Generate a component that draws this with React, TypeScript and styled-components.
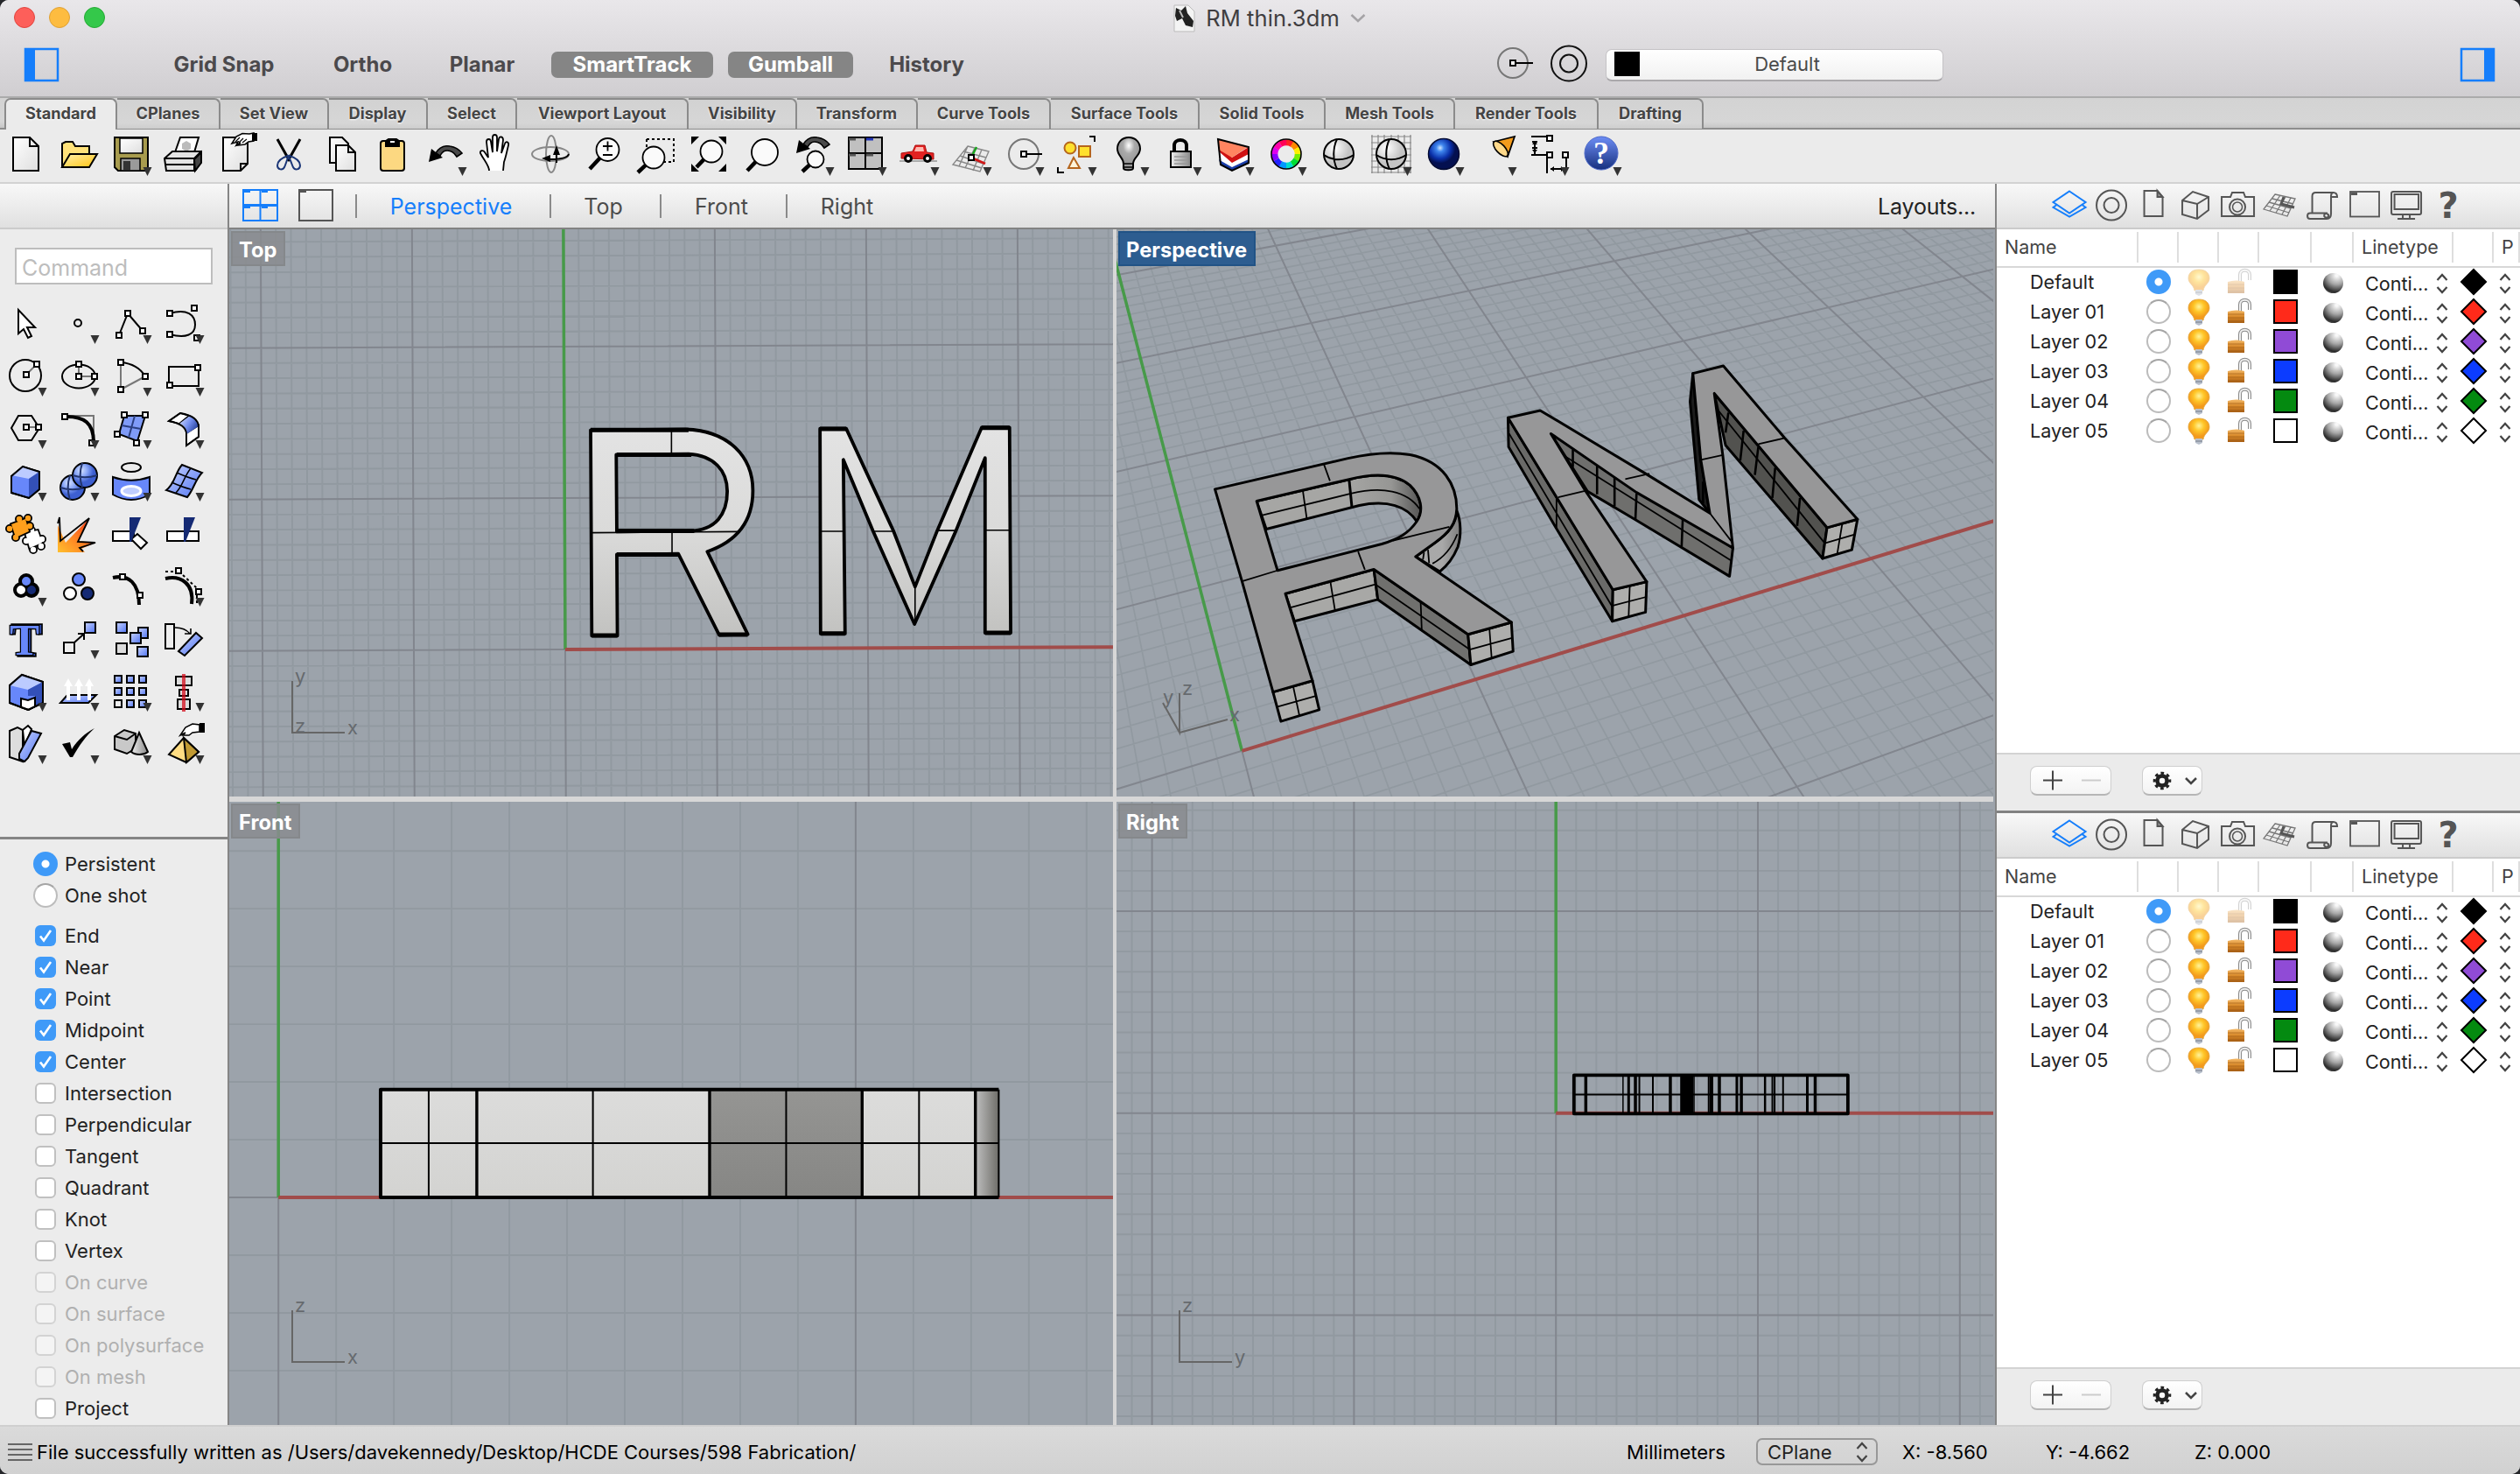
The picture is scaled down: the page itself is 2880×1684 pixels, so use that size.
import React from "react";
import styled, { createGlobalStyle, css } from "styled-components";

const Global = createGlobalStyle`
  * { box-sizing: border-box; }
  body { margin: 0; background: #26272b; font-family: Inter, "Liberation Sans", sans-serif; color: #222; }
`;

/* ---------- shell ---------- */
const Window = styled.div`
  width: 2880px;
  height: 1684px;
  display: flex;
  flex-direction: column;
  border-radius: 10px;
  overflow: hidden;
  background: #ebebeb;
`;
const Header = styled.header`
  height: 112px;
  flex: none;
  background: linear-gradient(#e9e7ea, #d0ced1);
  border-bottom: 2px solid #ababab;
`;
const TitleBar = styled.div`
  height: 44px;
  display: grid;
  grid-template-columns: 1fr auto 1fr;
  align-items: center;
`;
const Lights = styled.div`
  display: flex;
  gap: 16px;
  padding: 0 0 4px 16px;
`;
const Light = styled.span<{ $c: string; $b: string }>`
  width: 24px;
  height: 24px;
  border-radius: 50%;
  background: ${(p) => p.$c};
  border: 1px solid ${(p) => p.$b};
`;
const Title = styled.div`
  display: flex;
  align-items: center;
  gap: 12px;
  height: 41px;
  padding: 0 0 0 22px;
  font-size: 25.5px;
  letter-spacing: 0.1px;
  color: #403e41;
  align-self: start;
`;
const ModeBar = styled.div`
  height: 60px;
  display: flex;
  align-items: center;
`;
const ModeIcon = styled.svg`
  flex: none;
`;
const Modes = styled.div`
  display: flex;
  gap: 17px;
  margin-left: 104px;
`;
const Mode = styled.button<{ $w: number; $on?: boolean }>`
  width: ${(p) => p.$w}px;
  height: 30px;
  padding: 0;
  border: 0;
  border-radius: 7px;
  font: 700 24px/30px Inter, sans-serif;
  color: ${(p) => (p.$on ? "#fff" : "#4b494c")};
  background: ${(p) => (p.$on ? "#858585" : "transparent")};
`;
const LayerPick = styled.div`
  width: 386px;
  height: 37px;
  margin-left: 20px;
  display: flex;
  align-items: center;
  padding: 0 9px 0 9px;
  border-radius: 7px;
  border: 1px solid #c4c2c5;
  border-bottom: 2px solid #aaa8ab;
  background: linear-gradient(#fff, #f1f1f1);
  font-size: 22px;
  line-height: 32px;
  padding-bottom: 1px;
  color: #4a4a4a;
  span { flex: 1; text-align: center; }
`;
const BlackChip = styled.i`
  width: 29px;
  height: 28px;
  background: #000;
`;
const Spacer = styled.div`
  flex: 1;
`;

/* ---------- tabs + toolbar ---------- */
const Tabs = styled.nav`
  height: 36px;
  flex: none;
  display: flex;
  padding-left: 5px;
  background: linear-gradient(#d3d3d3, #d6d6d6 80%, #c6c6c6);
  border-bottom: 2px solid #8d8d8d;
`;
const Tab = styled.button<{ $w: number; $on?: boolean }>`
  width: ${(p) => p.$w}px;
  height: 35px;
  padding: 0;
  border: solid #8b8b8b;
  border-width: 2px 2px 0 0;
  border-radius: 0 7px 0 0;
  font: 700 18.2px/29px Inter, sans-serif;
  padding-bottom: 3px;
  color: #444;
  text-shadow: 0 1px 2px #fff;
  background: linear-gradient(#d2d2d2, #d6d6d6 80%, #cdcdcd);
  ${(p) =>
    p.$on &&
    css`
      height: 36px;
      border-left-width: 2px;
      border-radius: 7px 7px 0 0;
      background: #ebebeb;
      margin-bottom: -2px;
      padding-bottom: 4px;
    `}
`;
const Toolbar = styled.div`
  height: 62px;
  flex: none;
  display: flex;
  border-bottom: 2px solid #d2d2d2;
`;
const Cell = styled.svg`
  width: 60px;
  height: 60px;
  display: block;
  flex: none;
`;

/* ---------- body ---------- */
const Body = styled.main`
  height: 1418px;
  flex: none;
  display: grid;
  grid-template-columns: 260px 2022px 598px;
`;
const stripBg = css`
  height: 52px;
  flex: none;
  background: linear-gradient(#f8f8f8, #e0e0e0);
  border-bottom: 2px solid #cbcbcb;
`;
const Left = styled.aside`
  display: flex;
  flex-direction: column;
  background: #ececec;
`;
const LeftStrip = styled.div`
  ${stripBg}
`;
const Command = styled.div`
  margin: 21px 17px 15px;
  height: 42px;
  flex: none;
  border: 2px solid #bdbdbd;
  background: #fff;
  padding-left: 6px;
  font-size: 25px;
  line-height: 43px;
  color: #bdbdbd;
`;
const Palette = styled.div`
  display: grid;
  grid-template-columns: repeat(4, 60px);
  grid-auto-rows: 60px;
  height: 616px;
  flex: none;
`;
const Snaps = styled.div`
  flex: 1;
  border-top: 3px solid #858585;
  padding: 10px 0 0 38px;
`;
const SnapGroup = styled.div<{ $top?: number }>`
  margin-top: ${(p) => p.$top || 0}px;
`;
const Snap = styled.label<{ $dim?: boolean }>`
  height: 36px;
  display: flex;
  align-items: center;
  gap: 8px;
  font-size: 22px;
  color: ${(p) => (p.$dim ? "#b0b0b0" : "#222")};
`;
const Radio = styled.span<{ $on?: boolean }>`
  width: 28px;
  height: 28px;
  flex: none;
  border-radius: 50%;
  border: ${(p) => (p.$on ? "0" : "2px solid #bcbcbc")};
  border-top-color: #a5a5a5;
  background: ${(p) =>
    p.$on ? "radial-gradient(circle, #fff 0 4px, #3f9af8 5px)" : "#fff"};
`;
const Check = styled.span<{ $on?: boolean; $dim?: boolean }>`
  width: 24px;
  height: 24px;
  margin: 0 2px;
  flex: none;
  border-radius: 6px;
  display: grid;
  place-items: center;
  background: ${(p) => (p.$on ? "#3f9af8" : p.$dim ? "#f4f4f4" : "#fff")};
  border: ${(p) => (p.$on ? "0" : `2px solid ${p.$dim ? "#d3d3d3" : "#c0c0c0"}`)};
`;

/* ---------- viewports ---------- */
const Center = styled.section`
  display: flex;
  flex-direction: column;
  border: solid #858585;
  border-width: 0 2px;
  background: #9ca3ab;
`;
const ViewStrip = styled.div`
  ${stripBg}
  border-bottom-color: #828282;
  display: flex;
  align-items: center;
  padding: 0 22px 0 14px;
  font-size: 25px;
  color: #4c4c4c;
`;
const ViewTab = styled.span<{ $w: number; $on?: boolean }>`
  width: ${(p) => p.$w}px;
  padding: 2px 5px 0 0;
  text-align: center;
  color: ${(p) => (p.$on ? "#157efb" : "#4c4c4c")};
`;
const Bar = styled.i`
  width: 2px;
  height: 27px;
  background: #8a8a8a;
`;
const LayoutsLabel = styled.span`
  padding-top: 2px;
  color: #222;
  letter-spacing: -0.2px;
`;
const Views = styled.div`
  display: grid;
  grid-template-columns: 1010px 1002px;
  grid-template-rows: 648px 712px;
  gap: 6px 4px;
  background: linear-gradient(90deg, #d7d7d7 2016px, #9ca3ab 2016px);
`;
const View = styled.div`
  position: relative;
  background: #9ca3ab;
  overflow: hidden;
  svg { display: block; }
`;
const Tag = styled.span<{ $on?: boolean }>`
  position: absolute;
  left: 2px;
  top: 2px;
  height: 40px;
  padding: 0 8px 0 7px;
  font-weight: 700;
  font-size: 23.7px;
  line-height: 39px;
  color: #fff;
  background: ${(p) => (p.$on ? "#2d5d90" : "rgba(138,140,143,.85)")};
  border: 2px solid ${(p) => (p.$on ? "#215386" : "#85888b")};
`;

/* ---------- right panel ---------- */
const Right = styled.aside`
  display: flex;
  flex-direction: column;
  background: #fff;
`;
const Panel = styled.div<{ $h: number; $rule?: boolean }>`
  height: ${(p) => p.$h}px;
  display: flex;
  flex-direction: column;
  border-top: ${(p) => (p.$rule ? "3px solid #828282" : "0")};
`;
const PanelStrip = styled.div`
  ${stripBg}
  display: flex;
  padding-left: 59px;
`;
const StripIcon = styled.svg`
  width: 48.1px;
  height: 50px;
  flex: none;
`;
const cols = css`
  display: grid;
  grid-template-columns: 162px 46px 46px 46px 60px 48px 114px 46px 30px;
`;
const Head = styled.div`
  ${cols}
  height: 44px;
  flex: none;
  border-bottom: 2px solid #d8d8d8;
  font-size: 21.5px;
  color: #444;
`;
const HeadCell = styled.div`
  height: 35px;
  margin-top: 3px;
  padding: 0 0 0 9px;
  line-height: 35px;
  border-right: 2px solid #dedede;
  white-space: nowrap;
`;
const Rows = styled.div`
  flex: 1;
  margin-top: -1px;
`;
const Row = styled.div`
  ${cols}
  height: 34px;
  align-items: center;
  justify-items: center;
  font-size: 21.6px;
`;
const LayerName = styled.span`
  justify-self: start;
  padding-left: 38px;
`;
const Line = styled.span`
  justify-self: stretch;
  display: flex;
  justify-content: space-between;
  align-items: center;
  padding: 3px 6px 0 13px;
`;
const PrintWidth = styled.span`
  display: flex;
  padding: 3px 4px 0 0;
`;
const Swatch = styled.i<{ $c: string }>`
  width: 28px;
  height: 28px;
  margin-right: 1px;
  border: 2px solid #000;
  background: ${(p) => p.$c};
`;
const Ball = styled.i`
  width: 23px;
  height: 23px;
  margin-top: 2px;
  border-radius: 50%;
  background: radial-gradient(circle at 68% 12%, #f8f8f8 5%, #a6a6a6 40%, #2a2a2a 74%, #777 92%);
`;
const PanelFoot = styled.div`
  height: 66px;
  flex: none;
  display: flex;
  gap: 35px;
  padding: 13px 0 0 38px;
  background: #ebebeb;
  border-top: 2px solid #d3d3d3;
`;
const FootBtn = styled.div<{ $w: number }>`
  width: ${(p) => p.$w}px;
  height: 34px;
  border-radius: 8px;
  border: 1px solid #cfcfcf;
  border-bottom: 2px solid #b6b6b6;
  background: linear-gradient(#fff, #f3f3f3);
`;

/* ---------- status ---------- */
const Status = styled.footer`
  flex: 1;
  display: flex;
  align-items: center;
  padding: 3px 0 0 9px;
  background: linear-gradient(#dadada, #d1d1d1);
  border-top: 2px solid #cfcfcf;
  font-size: 22px;
  color: #000;
`;
const StatusText = styled.span<{ $w: number; $ml?: number }>`
  width: ${(p) => p.$w}px;
  margin-left: ${(p) => p.$ml || 0}px;
  white-space: nowrap;
`;
const PlanePick = styled.div`
  width: 139px;
  height: 31px;
  display: flex;
  align-items: center;
  justify-content: space-between;
  padding: 0 9px 0 11px;
  border: 2px solid #989898;
  border-radius: 7px;
  color: #222;
`;

/* ---------- icon helpers ---------- */
const H = ({ x, y }: { x: number; y: number }) => (
  <rect x={x - 3} y={y - 3} width="6" height="6" fill="#fff" stroke="#000" strokeWidth="2" />
);
const Arrow = () => <path d="M43.5 43h10l-5 10z" fill="#333" />;
const Lens = ({ x, y, r, tx, ty }: { x: number; y: number; r: number; tx: number; ty: number }) => {
  const d = Math.hypot(tx - x, ty - y);
  return (
    <>
      <path d={`M${x + ((tx - x) * r) / d} ${y + ((ty - y) * r) / d}L${tx} ${ty}`} strokeWidth="4.5" />
      <circle cx={x} cy={y} r={r} fill="#fafafa" strokeWidth="1.8" />
    </>
  );
};
const Defs = () => (
  <svg width="0" height="0" style={{ position: "absolute" }}>
    <defs>
      <linearGradient id="gold" x2="1" y2="1"><stop stopColor="#fff3b0" /><stop offset="1" stopColor="#ffc20e" /></linearGradient>
      <linearGradient id="page" x2="1" y2="1"><stop stopColor="#fff" /><stop offset="1" stopColor="#dedede" /></linearGradient>
      <linearGradient id="blue" x2="1" y2="1"><stop stopColor="#c8d3ff" /><stop offset="1" stopColor="#4f74f2" /></linearGradient>
      <linearGradient id="metal" x2="1"><stop stopColor="#eee" /><stop offset="1" stopColor="#888" /></linearGradient>
      <linearGradient id="fillet" x1="0" y1="0" x2="1" y2=".6"><stop stopColor="#dfe6ff" /><stop offset=".55" stopColor="#7590f0" /><stop offset="1" stopColor="#24409c" /></linearGradient>
      <linearGradient id="burst" x1="0" y1="1" x2="1" y2="0"><stop stopColor="#ffc02e" /><stop offset=".5" stopColor="#ff7b22" /><stop offset="1" stopColor="#f02a10" /></linearGradient>
      <radialGradient id="ball" cx=".35" cy=".3"><stop stopColor="#fff" /><stop offset="1" stopColor="#c4c4c4" /></radialGradient>
      <radialGradient id="bball" cx=".35" cy=".3"><stop stopColor="#d5e2ff" /><stop offset=".5" stopColor="#8ba8f8" /><stop offset="1" stopColor="#3d5fd0" /></radialGradient>
      <radialGradient id="deep" cx=".38" cy=".3"><stop stopColor="#cfe6ff" /><stop offset=".25" stopColor="#3f86ee" /><stop offset=".7" stopColor="#0a2fa8" /><stop offset="1" stopColor="#041050" /></radialGradient>
      <radialGradient id="gbulb" cx=".5" cy=".25"><stop stopColor="#fff" /><stop offset=".5" stopColor="#aaa" /><stop offset="1" stopColor="#9a9a9a" /></radialGradient>
      <radialGradient id="ybulb" cx=".5" cy=".35"><stop stopColor="#fff39a" /><stop offset=".5" stopColor="#ffc627" /><stop offset="1" stopColor="#f39a1c" /></radialGradient>
      <linearGradient id="brass" x2="0" y2="1"><stop stopColor="#f3b866" /><stop offset=".5" stopColor="#d98a2b" /><stop offset="1" stopColor="#a85f14" /></linearGradient>
      <linearGradient id="help" x2="0" y2="1"><stop stopColor="#6d8df5" /><stop offset="1" stopColor="#17307e" /></linearGradient>
      <linearGradient id="topFace" x2="0" y2="1"><stop stopColor="#e3e3e3" /><stop offset=".5" stopColor="#dadad9" /><stop offset="1" stopColor="#c2c2c0" /></linearGradient>
      <linearGradient id="frontFace" x2="0" y2="1"><stop stopColor="#dcdcdb" /><stop offset="1" stopColor="#d3d3d1" /></linearGradient>
      <linearGradient id="darkFace" x2="0" y2="1"><stop stopColor="#959593" /><stop offset="1" stopColor="#868684" /></linearGradient>
      <linearGradient id="curveFace" x2="1"><stop stopColor="#bbb" /><stop offset="1" stopColor="#6f6e69" /></linearGradient>
      <linearGradient id="innerFace" x2="1"><stop offset=".55" stopColor="#a6a6a4" /><stop offset=".82" stopColor="#969694" /><stop offset="1" stopColor="#555" /></linearGradient>
      <linearGradient id="outerFace" x2="1"><stop stopColor="#aaa" /><stop offset=".6" stopColor="#a8a8a8" /><stop offset="1" stopColor="#7c7c7c" /></linearGradient>
    </defs>
  </svg>
);

const wheel = ["#f22", "#f80", "#fe0", "#7e0", "#0d3", "#0dc", "#09f", "#22f", "#80f", "#d0e", "#f0a", "#f05"];
const ringArc = (i: number) => {
  const a = ((i * 30 - 90) * Math.PI) / 180;
  const b = ((i * 30 - 59) * Math.PI) / 180;
  const p = (t: number) => `${30 + 13.2 * Math.cos(t)} ${28 + 13.2 * Math.sin(t)}`;
  return `M${p(a)}A13.2 13.2 0 0 1 ${p(b)}`;
};
const cursorHand = "M25 16l5-8 7-3.5 8 .5 5-1v9l-6 1-4 3-8 1 3-3-5 3 2-4z";
const undo = (dy: number) => (
  <g transform={`translate(0 ${dy})`}>
    <path d="M18 27C22 20 28 18 34 19c7 1 11 4 14 8l-6 4c-3-5-7-7-11-7-3 0-6 2-8 6z" fill="#4a4a4a" strokeWidth="1.600" />
    <path d="M10 37l3-15 13 10z" fill="#000" stroke="none" />
  </g>
);
/* Jigsaw pieces are drawn twice: a heavy outline pass, then the fill on top of it. */
const Puzzle = ({ fill, knobs, body }: { fill: string; knobs: [number, number][]; body: string }) => (
  <>
    <g stroke="#000" strokeWidth="3.600" fill="#000">
      <path d={body} />
      {knobs.map(([x, y]) => <circle key={`${x}-${y}`} cx={x} cy={y} r="3.200" />)}
    </g>
    <g stroke="none" fill={fill}>
      <path d={body} />
      {knobs.map(([x, y]) => <circle key={`${x}-${y}`} cx={x} cy={y} r="3.200" />)}
    </g>
  </>
);

type Ico = [React.ReactNode, boolean?];
const tools: Ico[] = [
  [<path d="M15 9h19l10 10v28H15zM34 9v10h10" fill="url(#page)" />],
  [<><path d="M11 43V16l4-2h8l3 5h16v8" fill="#ffe27a" /><path d="M11 43l9-15h31l-9 15z" fill="url(#gold)" /></>],
  [<><path d="M11 9h38v38H15l-4-4z" fill="#a89c4e" /><path d="M17 10h26v17H17z" fill="url(#page)" strokeWidth="1.5" /><path d="M18 33h22v14H18z" fill="#9a9a9a" strokeWidth="1.5" /><path d="M21 36h8v10h-8z" fill="#333" stroke="none" /></>, true],
  [<><path d="M20 26l6-17h21l-5 17z" fill="#fff" /><path d="M28 16l5-3 5 3v6l-5 3-5-3z" fill="#bbb" stroke="none" /><path d="M8 33l9-8h33v12l-7 10H10z" fill="#e4e4e4" /><path d="M9 33h33l8-8M9 40h33l8-8M42 33v13" /><path d="M42 34l8-8v12l-7 9z" fill="#444" /></>],
  [<><path d="M15 9h28v30l-8 8H15zM35 47v-8h8" fill="url(#page)" /><path d={cursorHand} fill="#fff" strokeWidth="1.6" /><path d="M48 4h6v9h-6z" fill="#000" stroke="none" /><path d="M29 14l5-5M33 15l5-5M37 15l5-4" strokeWidth="1.2" /></>],
  [<><path d="M17 11l14 25M43 11L29 36" strokeWidth="3" /><path d="M31 30c6 2 12 6 12 11s-6 6-8 2-3-10-7-14M29 30c-6 2-12 6-12 11s6 6 8 2 3-10 6-14" stroke="#1b3677" strokeWidth="2" /></>],
  [<><path d="M17 9h14l7 7v22H17z" fill="url(#page)" /><path d="M24 18h14l8 8v21H24zM38 18v8h8" fill="url(#page)" /></>],
  [<><rect x="15" y="13" width="27" height="34" rx="3" fill="#fcd881" /><path d="M21 19v-6l3-2h9l3 2v6z" fill="#000" /><path d="M26 14h5" stroke="#fff" /></>],
  [undo(0), true],
  [<path d="M19 47c0-6-6-12-10-20-1-3 3-4 5-1l4 6-2-18c0-4 5-4 5 0l2 12V9c0-4 5-4 5 0v16l2-14c1-4 5-3 5 1l-2 15 4-11c1-3 5-2 4 2-2 8-3 14-5 19l-1 10" fill="#fff" strokeWidth="1.800" />],
  [<><ellipse cx="30" cy="28" rx="6" ry="21" stroke="#888" /><ellipse cx="29" cy="28" rx="21" ry="8" stroke="#888" /><path d="M36 38V24M50 28c-1 4-9 6-22 6" strokeWidth="2" /><path d="M36 18l4 11h-8zM19 33l10-4v8z" fill="#000" stroke="none" /></>],
  [<><Lens x={34.5} y={23} r={13} tx={14} ty={45} /><path d="M29 19h11M34.500 13.500v11M29 29h11" strokeWidth="1.8" /></>],
  [<><path d="M19 11h31v26H38M19 11v9" strokeDasharray="3 3" /><Lens x={27} y={32} r={12.500} tx={9} ty={49} /></>],
  [<><path d="M10 8h9l-9 9zM50 8v9l-9-9zM50 48h-9l9-9zM10 48v-9l9 9z" fill="#000" stroke="none" /><Lens x={33} y={25} r={12.500} tx={16} ty={43} /></>],
  [<Lens x={34} y={26} r={15} tx={14} ty={47} />],
  [<>{undo(-10)}<Lens x={32} y={34} r={9.500} tx={17} ty={48} /></>, true],
  [<><rect x="10" y="9" width="38" height="36" fill="#c0c0c0" /><path d="M29 9v36M10 27h38" /><path d="M10 11h8M10 29h8M30 29h8" stroke="#555" strokeWidth="3" /><path d="M30 11h8" stroke="#2336b8" strokeWidth="3" /></>, true],
  [<><path d="M8 36h43" stroke="#aaa" /><path d="M10 33v-6l13-2 3-7h11l2 8 8 1v7z" fill="#e32222" stroke="#a11" strokeWidth="1" /><path d="M27 20h8l1 5H25z" fill="#ffb8b0" stroke="none" /><circle cx="18" cy="33" r="3.500" fill="#fff" strokeWidth="3" /><circle cx="40" cy="33" r="3.500" fill="#fff" strokeWidth="3" /></>, true],
  [<><path d="M26 19l24 6-10 23-31-8zM21 25l26 7M17 30l27 9M13 35l29 9M34 21l-11 23M42 23l-10 24M26 19L16 42" stroke="#888" strokeWidth="1.4" /><path d="M30 32l6-12" stroke="#19a51e" strokeWidth="2.500" /><path d="M30 32l16 7" stroke="#d01818" strokeWidth="3" /><H x={30} y={32} /></>, true],
  [<><circle cx="30" cy="28" r="17" stroke="#777" /><path d="M30 28h21" /><H x={30} y={28} /></>, true],
  [<><circle cx="23" cy="21" r="6.500" fill="#ffe02e" stroke="#b5651d" /><rect x="33" y="19" width="13" height="12" fill="#ffe02e" stroke="#b5651d" /><path d="M27 32l-6 12h13z" stroke="#b5651d" fill="#fff3d8" /><path d="M45 8h6v6M9 43v6h7" /></>, true],
  [<><path d="M30 9c-8 0-13 6-13 13 0 8 7 10 7 17v5c0 3 11 3 11 0v-5c0-7 8-9 8-17 0-7-5-13-13-13z" fill="url(#gbulb)" /><path d="M25 39h10M25 43h10" strokeWidth="1.500" /></>, true],
  [<><path d="M22 25v-7c0-8 14-8 14 0v7" strokeWidth="4" /><rect x="18" y="25" width="23" height="18" fill="url(#metal)" /><path d="M22 31h15M22 35h15M22 39h15" stroke="#999" strokeWidth="1.500" /></>, true],
  [<><path d="M13 34l15 8 19-9v6L28 47l-13-6z" fill="#1a3ea8" stroke="none" /><path d="M12 25l16 12 19-11v8L28 43l-14-8z" fill="#fff" stroke="none" /><path d="M12 16l16 16 19-12v8L28 38 13 25z" fill="#d01212" stroke="none" /><path d="M12 11l34 9-18 12-15-9z" fill="#ff8460" stroke="none" /><path d="M12 11l35 9v18l-19 9-13-7z" /></>, true],
  [<><g strokeWidth="7">{wheel.map((c, i) => <path key={i} d={ringArc(i)} stroke={c} />)}</g><circle cx="30" cy="28" r="17" strokeWidth="1.600" /></>, true],
  [<><circle cx="30" cy="28" r="17" fill="url(#ball)" /><path d="M28 11c-5 10-5 24 0 34M13 29c10 7 24 7 34 0" /></>],
  [<><path d="M8 6v44M15 6v44M22 6v44M30 6v44M38 6v44M45 6v44M52 6v44M7 8h46M7 15h46M7 22h46M7 29h46M7 36h46M7 43h46M7 49h46" stroke="#888" strokeWidth="1.200" /><circle cx="30" cy="28" r="17" fill="url(#ball)" /><path d="M28 11c-5 10-5 24 0 34M13 29c10 7 24 7 34 0" /></>, true],
  [<><circle cx="30" cy="28" r="17.500" fill="url(#deep)" stroke="#050c33" strokeWidth="1.500" /></>, true],
  [<><path d="M27 14l24-6-8 23z" fill="#f39b1c" strokeWidth="1.800" /><ellipse cx="35" cy="22" rx="5" ry="11" transform="rotate(-43 35 22)" fill="#ffd98a" strokeWidth="1.600" /></>, true],
  [<><path d="M10 8h18M14 14v16M11 14h6M11 21h6M10 29h18M28 32v18M50 32v14M32 45h16" /><path d="M32 45l4-3v6zM48 45l-4-3v6zM14 13l-3 4h6zM14 27l-3-4h6z" fill="#000" stroke="none" /><H x={31} y={10} /><H x={31} y={29} /><H x={49} y={29} /></>, true],
  [<><circle cx="30" cy="27" r="19" fill="url(#help)" stroke="#4a67c8" strokeWidth="1" /><text x="30" y="39" fontSize="36" fontWeight="700" fontFamily="Liberation Serif, serif" textAnchor="middle" fill="#fff" stroke="none">?</text></>, true],
];

const palette: Ico[] = [
  [<path d="M21 14v27l6-5 5 10 4-2-5-10h9z" fill="#fff" />],
  [<ellipse cx="29" cy="29" rx="4" ry="4" />, true],
  [<><path d="M16 43l10-25 17 20" /><H x={16} y={43} /><H x={26} y={18} /><H x={43} y={38} /></>, true],
  [<><path d="M14 18c20-6 29 2 29 13S33 47 14 42" /><H x={14} y={18} /><H x={42} y={12} /><H x={14} y={42} /><H x={45} y={46} /></>, true],
  [<><circle cx="29" cy="29" r="18" /><path d="M30 28l11-11" stroke="#777" /><H x={30} y={28} /><H x={42} y={16} /></>, true],
  [<><ellipse cx="30" cy="30" rx="19" ry="13.500" /><path d="M30 17v13h17" stroke="#777" /><H x={30} y={16} /><H x={30} y={30} /><H x={48} y={30} /></>, true],
  [<><path d="M18 14v31l28-15" stroke="#777" /><path d="M18 14c12 1 22 6 28 16" /><H x={18} y={14} /><H x={18} y={45} /><H x={46} y={30} /></>, true],
  [<><path d="M13 19h34v22H13z" /><H x={46} y={20} /><H x={14} y={40} /></>, true],
  [<><path d="M13 29l8-14h15l9 14-9 14H21z" /><path d="M30 28h14" stroke="#777" /><H x={30} y={28} /><H x={44} y={28} /></>, true],
  [<><path d="M18 15h29v29" stroke="#777" /><path d="M16 16c20 0 31 7 31 29" strokeWidth="4" /><H x={14} y={16} /><H x={45} y={46} /></>, true],
  [<><path d="M22 15h24l-9 29-21-8z" fill="#7f9bf8" /><path d="M34 15l-7 25M19 26l22 4" stroke="#2b3f80" /><H x={22} y={14} /><H x={46} y={14} /><H x={14} y={36} /><H x={36} y={46} /></>, true],
  [<><path d="M13 21l13-9 10 3-11 9z" fill="#fff" strokeWidth="1.800" /><path d="M33 35l14-9v13l-14 10z" fill="#fff" strokeWidth="1.800" /><path d="M25 24l12-9c6 2 10 6 10 12l-14 9c0-7-3-11-8-12z" fill="url(#fillet)" stroke="none" /><path d="M13 21l13-9c12 2 21 6 21 16v11l-14 10V36c0-9-9-13-20-15z" strokeWidth="1.800" /></>, true],
  [<><path d="M13 24l13-11 19 6v20l-12 10-20-6z" fill="#6787fa" /><path d="M13 23l13-10 19 6-12 8z" fill="#bccbff" stroke="none" /><path d="M33 27l12-8v20L33 49z" fill="#3350b8" stroke="none" /><path d="M13 24l13-11 19 6v20l-12 10-20-6z" /></>, true],
  [<><circle cx="23" cy="37" r="14" fill="url(#bball)" /><path d="M20 23c-3 9-3 19 0 28M9 37c9 3 19 3 28 0" stroke="#22356e" /><circle cx="37" cy="23" r="14" fill="url(#bball)" /><path d="M34 9c-3 9-3 19 0 28M23 23c9 3 19 3 28 0" stroke="#22356e" /></>, true],
  [<><ellipse cx="30" cy="14" rx="11" ry="5" /><path d="M9 25c14 5 28 5 42 0v20c-14 8-28 8-42 0z" fill="#6787fa" /><ellipse cx="30" cy="41" rx="11" ry="5.500" fill="#c0ceff" stroke="#fff" strokeWidth="3" /></>, true],
  [<><path d="M28 11l23 9c-8 8-10 20-17 28L10 40c10-7 10-20 18-29z" fill="url(#blue)" /><path d="M38 15c-8 10-9 20-17 28M22 20c9 4 14 6 22 8M16 31c9 4 14 6 22 8" strokeWidth="1.500" /></>, true],
  [<><Puzzle fill="#fff" body="M29 29l14-3 5 14-14 6z" knobs={[[36, 26], [48, 36], [30, 38], [38, 48], [47, 44]]} /><Puzzle fill="#ff9f1c" body="M13 19l16-6 4 14-15 7z" knobs={[[11, 24], [22, 13], [32, 12], [34, 21], [18, 34]]} /></>],
  [<><path d="M6 51V20l9 20 27-28-13 26 20 2-16 7 4 4z" fill="url(#burst)" stroke="none" /><path d="M6 18l2-7 1 27 33-26-13 27 20 1-18 6 4 4" strokeWidth="1.800" /></>],
  [<><rect x="9" y="27" width="24" height="11" fill="#fff" /><path d="M30 36l7-6 11 10-7 7z" fill="#fff" /><path d="M28 11h13l-11 28h-2z" fill="#152a74" stroke="none" /></>],
  [<><rect x="11" y="27" width="36" height="11" fill="#fff" /><path d="M30 11h13L32 39h-2z" fill="#152a74" stroke="none" /></>],
  [<><g strokeWidth="6"><circle cx="30" cy="24" r="6" /><circle cx="24" cy="34" r="6" /><circle cx="36" cy="34" r="6" /></g><circle cx="24" cy="34" r="6" fill="#fff" /><circle cx="36" cy="34" r="6" fill="#152a74" /><circle cx="30" cy="24" r="6" fill="#6787fa" /></>, true],
  [<><circle cx="30" cy="22" r="7" fill="#6787fa" /><circle cx="20" cy="38" r="7" fill="#fff" /><circle cx="40" cy="38" r="7" fill="#152a74" /></>],
  [<><path d="M9 20c18-4 30 6 30 31" strokeWidth="4" /><H x={20} y={19} /><H x={40} y={40} /></>],
  [<><path d="M9 21c18-4 33 6 30 29" strokeWidth="4" /><path d="M9 13h14M29 17l16 15v17" strokeDasharray="3 3" /><H x={24} y={12} /><H x={47} y={36} /></>, true],
  [<><text x="30.500" y="49" fontSize="52" fontWeight="700" fontFamily="Liberation Serif, serif" textAnchor="middle" fill="#3350b8" stroke="#000" strokeWidth="3.500" paintOrder="stroke">T</text><text x="28" y="48" fontSize="51" fontWeight="700" fontFamily="Liberation Serif, serif" textAnchor="middle" fill="#6787fa" stroke="#000" strokeWidth="2.500" paintOrder="stroke">T</text></>],
  [<><rect x="13" y="34" width="12" height="12" fill="#eee" /><rect x="37" y="11" width="12" height="12" fill="url(#blue)" /><path d="M25 34l10-9M29 24h7v7" /></>, true],
  [<g fill="url(#blue)"><rect x="13" y="11" width="12" height="12" /><rect x="38" y="17" width="11" height="12" /><rect x="29" y="23" width="12" height="12" /><rect x="37" y="39" width="12" height="11" /><rect x="13" y="35" width="12" height="12" fill="#ddd" /></g>],
  [<><rect x="9" y="13" width="10" height="28" fill="#eee" /><path d="M24 44l20-21 7 6-20 20z" fill="url(#blue)" /><path d="M20 17c8 0 13 2 17 7M31 24h7v-6" strokeWidth="1.600" /></>],
  [<><path d="M11 23l14-12 24 8v24L32 51 11 43z" fill="#6787fa" /><path d="M11 23l14-12 24 8-17 9z" fill="#bccbff" stroke="none" /><path d="M32 28l17-9v24l-9 5V35H32z" fill="#3350b8" stroke="none" /><path d="M24 38l8 2 8-3v10l-7 4-9-3z" fill="#fff" /><path d="M11 23l14-12 24 8v24L32 51 11 43z" /></>, true],
  [<><path d="M17 34h33l-9 9H9z" fill="url(#blue)" /><path d="M18 40V22M30 40V22M42 40V22" stroke="#fff" strokeWidth="4" /><path d="M13 24l5-9 5 9zM25 24l5-9 5 9zM37 24l5-9 5 9z" fill="#fff" stroke="none" /></>, true],
  [<g fill="url(#blue)">{[12, 26, 40].map((y) => [11, 25, 39].map((x) => <rect key={x + y * 100} x={x} y={y} width="8" height="8" fill={x === 11 && y === 40 ? "#eee" : undefined} />))}</g>, true],
  [<><rect x="21" y="13" width="18" height="10" fill="#ddd" /><rect x="25" y="28" width="10" height="7" fill="#ddd" /><rect x="23" y="39" width="14" height="11" fill="#ddd" /><path d="M30 10v43" stroke="#d40d1c" strokeWidth="4" opacity=".75" /></>, true],
  [<><path d="M11 15l9-4 6 3v36l-6-2-9-3z" fill="#ddd" /><path d="M26 14l6-5 4 4-8 20z" fill="#fff" /><path d="M22 41l14-26 11 3-15 28-4 4-6-3z" fill="url(#blue)" /></>, true],
  [<path d="M11 30l9-2 2 8c7-11 15-18 26-24-10 9-17 19-25 33h-3z" fill="#000" stroke="none" />, true],
  [<><path d="M11 21l11-7 13 4v17l-10 6-14-5z" fill="#c8c8c8" /><path d="M11 21l14 4 10-7" /><path d="M39 17l10 22c-5 4-14 4-19 0z" fill="url(#metal)" /></>, true],
  [<><path d="M13 42l17-19 17 16-14 12z" fill="#ffdd83" /><path d="M30 23l17 16-14 12z" fill="#c19a33" /><path d="M26 20l6-9 8-4 8 1v8l-8 1-4 3-7 0 3-3z" fill="#fff" strokeWidth="1.500" /><path d="M48 6h6v11h-6z" fill="#000" stroke="none" /></>, true],
];

const IconCell = ({ icon }: { icon: Ico }) => (
  <Cell viewBox="0 0 60 60">
    <g fill="none" stroke="#000" strokeWidth="2">{icon[0]}</g>
    {icon[1] && <Arrow />}
  </Cell>
);

const stripIcons: React.ReactNode[] = [
  <g stroke="#157efb"><path d="M24 8.500l18.500 12.500L24 33.500 5.500 21z" /><path d="M9.500 24L5.500 27 24 37.500 42.500 27l-4-3" /></g>,
  <><circle cx="24" cy="24.500" r="17" /><circle cx="24" cy="24.500" r="8.500" /></>,
  <><path d="M13.500 8h15l6 7v22h-21z" /><path d="M28.500 8v7h6z" fill="#999" /></>,
  <path d="M9 19l12-10 18 6v15L26 40 9 35zM9 19l17 4 13-8M26 23v17" />,
  <><path d="M6 15h10l2-5h13l2 5h10v22H6z" /><circle cx="24" cy="26.500" r="9" /><circle cx="24" cy="26.500" r="5.500" strokeWidth="1.500" /></>,
  <><path d="M19 12l23 5-9 20-27-8zM16 17l24 6M12 21l25 7M9 25l26 8M25 13L13 31M31 15l-11 18M37 16l-10 19" strokeWidth="1.300" stroke="#777" /><path d="M29 15l-3 8 15 4" strokeWidth="3" /></>,
  <><path d="M12.500 33V14c0-3 2-4 4-4h20c3.500 0 4.500 2 4.500 5h-6" /><path d="M37 10c-2 0-3 1-3 4v20c0 4-2 6-5 6H10c-4 0-4-6.500 0-6.500h20c-5 0-5 5-1 5 3 0 3-4 0-4" /></>,
  <><rect x="8" y="9" width="33" height="28.500" strokeWidth="1.800" /><path d="M9 11.500h7" strokeWidth="3" /></>,
  <><rect x="7" y="9" width="34" height="26" rx="2" /><rect x="10.500" y="12" width="27.500" height="17" /><path d="M20 35v4M28 35v4M14 40h20" /></>,
  <text x="24" y="39" fontSize="40" fontWeight="700" fontFamily="DejaVu Sans, sans-serif" textAnchor="middle" fill="#555" stroke="none">?</text>,
];

const Stepper = () => (
  <svg width="14" height="26" fill="none" stroke="#444" strokeWidth="2.200">
    <path d="M1.500 9L7 3l5.500 6M1.500 17L7 23l5.500-6" />
  </svg>
);
const Bulb = ({ dim }: { dim?: boolean }) => (
  <svg width="28" height="34" opacity={dim ? 0.45 : 1}>
    <path d="M14 3C6 3 2 7 2 13c0 6 6 7 7 14h10c1-7 7-8 7-14 0-6-4-10-12-10z" fill="url(#ybulb)" stroke="#e0a53a" strokeWidth=".8" />
    <path d="M10 26h8v5l-4 2-4-2z" fill="#b9c0cc" /><path d="M10 29h8" stroke="#737b88" />
  </svg>
);
const Unlock = ({ dim }: { dim?: boolean }) => (
  <svg width="30" height="34" opacity={dim ? 0.38 : 1}>
    <path d="M16 17V9c0-7 11-7 11 0v6" fill="none" stroke="#8a8a8a" strokeWidth="4" /><path d="M16 17V9c0-7 11-7 11 0v6" fill="none" stroke="#eee" strokeWidth="2" />
    <path d="M2 17c6-2 12-2 19 0v13H2z" fill="url(#brass)" /><path d="M2 20h19M2 24h19M2 28h19" stroke="#9c5a16" opacity=".6" />
  </svg>
);

/* ---------- grids and scenes ---------- */
const MINOR = "#9199a0";
const MAJOR = "#82868e";
const GREEN = "#479a49";
const RED = "#a14c4a";
const range = (a: number, b: number) => Array.from({ length: b - a + 1 }, (_, i) => a + i);
const Grid = ({ step, ext = 75 }: { step: number; ext?: number }) => {
  const L = ext * step;
  const path = (major: boolean) =>
    range(-ext, ext)
      .filter((i) => (i % 10 === 0) === major)
      .map((i) => `M${i * step} ${-L}V${L}M${-L} ${i * step}H${L}`)
      .join("");
  return (
    <>
      <path d={path(false)} stroke={MINOR} strokeWidth="1.900" />
      <path d={path(true)} stroke={MAJOR} strokeWidth="2" />
    </>
  );
};
const AxisMark = ({ x, y, up, right, corner }: { x: number; y: number; up: string; right: string; corner?: string }) => (
  <g fontSize="22" fill="#666a6e" fontFamily="Inter, sans-serif">
    <path d={`M${x} ${y - 59}V${y}H${x + 60}`} fill="none" stroke="#666" strokeWidth="2" />
    <text x={x + 3} y={y - 57}>{up}</text>
    <text x={x + 63} y={y + 2}>{right}</text>
    {corner && <text x={x + 3} y={y}>{corner}</text>}
  </g>
);

const TopScene = () => (
  <svg width="1010" height="648">
    <g transform="translate(384 480) rotate(-.255)">
      <Grid step={17.3} />
      <path d="M0 0V-600" stroke={GREEN} strokeWidth="3.500" />
      <path d="M0 0H800" stroke={RED} strokeWidth="4" />
    </g>
    <g transform="translate(-2 -2) scale(.65049 .41454)" fill="none" stroke="#000" strokeWidth="3.800" strokeLinejoin="round">
      <g fill="url(#topFace)" fillRule="evenodd">
        <path vectorEffect="non-scaling-stroke" d="M638 558L805 556C880 560 923 630 923 725C923 800 900 862 843 893L914 1121L864 1123L792 899L684 901L685 1125L640 1125ZM683 626L810 624C855 628 878 670 878 727C878 790 858 834 812 836L684 838Z" />
        <path vectorEffect="non-scaling-stroke" d="M1041 554H1087L1170 836L1208 990L1247 835L1325 551H1374L1376 1117H1331V635L1280 835L1207 1093L1134 836L1082 640L1085 1119H1042Z" />
      </g>
      <path vectorEffect="non-scaling-stroke" strokeWidth="5" d="M638 558H810M684 626H815M684 836H820M684 901H792M640 1124H685M864 1122H914M1041 555H1087M1325 552H1374M1042 1119H1085M1331 1117H1376" />
      <path vectorEffect="non-scaling-stroke" strokeWidth="1.600" d="M780 560V622M640 841L897 838M781 841V896M1041 837H1083M1134 837H1170M1247 835H1280M1332 834H1375M1208 990V1093" />
    </g>
    <AxisMark x={72} y={575} up="y" right="x" corner="z" />
  </svg>
);

/* Projects ground-plane units to the picture plane through four known corners of a 30×30 square. */
const corner = [[143.400, 595.8], [862.3, 376.1], [569.200, 36.1], [27.4, 147.2]];
const [p0, p1, p2, p3] = corner;
const dx1 = p1[0] - p2[0], dx2 = p3[0] - p2[0], dx3 = p0[0] - p1[0] + p2[0] - p3[0];
const dy1 = p1[1] - p2[1], dy2 = p3[1] - p2[1], dy3 = p0[1] - p1[1] + p2[1] - p3[1];
const det = dx1 * dy2 - dx2 * dy1;
const g = (dx3 * dy2 - dx2 * dy3) / det;
const h = (dx1 * dy3 - dx3 * dy1) / det;
const project = (X: number, Y: number) => {
  const u = X / 30, v = Y / 30;
  const w = g * u + h * v + 1;
  const x = (p1[0] - p0[0] + g * p1[0]) * u + (p3[0] - p0[0] + h * p3[0]) * v + p0[0];
  const y = (p1[1] - p0[1] + g * p1[1]) * u + (p3[1] - p0[1] + h * p3[1]) * v + p0[1];
  return `${(x / w).toFixed(1)} ${(y / w).toFixed(1)}`;
};
const perspPath = (major: boolean) =>
  range(-15, 70).filter((i) => (i % 10 === 0) === major).map((i) => `M${project(i, -18)}L${project(i, 60)}`).join("") +
  range(-18, 60).filter((i) => (i % 10 === 0) === major).map((i) => `M${project(-15, i)}L${project(70, i)}`).join("");

const nss = { vectorEffect: "non-scaling-stroke" as const };
const PerspectiveScene = () => (
  <svg width="1002" height="648">
    <path d={perspPath(false)} stroke={MINOR} strokeWidth="1.700" />
    <path d={perspPath(true)} stroke={MAJOR} strokeWidth="2" />
    <path d={`M${project(0, 0)}L${project(0, 50)}`} stroke={GREEN} strokeWidth="3.500" />
    <path d={`M${project(0, 0)}L${project(50, 0)}`} stroke={RED} strokeWidth="4" />
    <g transform="translate(-6 -2) scale(.64412 .41454)" fill="none" stroke="#000" strokeWidth="3" strokeLinejoin="round">
      {/* letter R, side walls */}
      <path {...nss} fill="url(#innerFace)" d="M258 754L422 694C470 675 505 678 530 710C550 740 555 780 542 810C525 768 490 750 440 766L275 831Z" />
      <path {...nss} fill="url(#outerFace)" d="M613 780C621 810 621 850 615 880C607 910 598 930 583 948L540 907L575 868C600 840 612 815 613 780Z" />
      <path {...nss} fill="#a8a8a6" d="M309 1009L466 942L473 1025L325 1085Z" />
      <path {...nss} fill="#70706e" d="M466 942L633 1121L638 1205L473 1025Z" />
      <path {...nss} fill="#aeaeac" d="M633 1121L710 1088L713 1168L638 1205ZM287 1280L357 1249L369 1329L301 1361Z" />
      <path {...nss} strokeWidth="1.800" d="M268 793L425 733C480 712 525 725 547 775M340 726L347 803M318 1047L470 983M389 978L397 1055M470 985L636 1163M549 1033L551 1111M671 1106L675 1188M636 1163L711 1131M323 1266L334 1346M294 1321L363 1291M614 845C605 880 590 910 570 926M562 888L564 925M555 895L553 915" />
      <path {...nss} d="M422 694L427 771" />
      {/* letter M, side walls */}
      <path {...nss} fill="#6a6a68" d="M704 524L890 998L889 1085L790 830L705 604Z" />
      <path {...nss} fill="#6f6f6d" d="M780 568L1103 883L1097 961L930 805L845 727Z" />
      <path {...nss} fill="#1c1c1c" d="M1032 402L1046 640L1062 787L1043 750L1027 480Z" />
      <path {...nss} fill="#52524f" d="M1070 457L1270 827L1262 912L1090 600Z" />
      <path {...nss} fill="#aeaeac" d="M890 998L950 976L948 1060L889 1085ZM1270 827L1324 804L1314 888L1262 912Z" />
      <path {...nss} strokeWidth="1.800" d="M706 568L889 1045M790 745V830M805 630L1100 918M1075 500L1266 870M920 988L918 1072M890 1042L949 1018M1297 816L1288 900M1266 870L1319 846" />
      <path {...nss} strokeWidth="2.600" d="M819 612V660M862 653V735M893 690V768M932 733L930 805M1014 803L1012 880M1095 510L1090 565M1122 560L1116 642M1148 605L1142 682M1178 662L1173 745M1222 745L1217 822M1050 700V760" />
      {/* top faces */}
      <path {...nss} fill="#979798" fillRule="evenodd" d="M184 721L420 636C460 622 500 618 530 626C590 645 613 710 613 775C612 815 600 840 575 868L540 907L710 1088L633 1121L466 942L309 1009L357 1249L287 1280L232 975ZM258 754L422 694C470 675 505 678 530 710C550 740 555 780 542 810C528 842 510 858 480 872L295 945Z" />
      <path {...nss} fill="#979798" d="M704 524L761 504L950 680L1062 787L1046 640L1032 402L1086 381L1195 580L1324 804L1270 827L1070 457L1085 627L1103 883L932 730L780 568L842 727L950 976L890 998Z" />
      <path {...nss} strokeWidth="1.800" d="M377 651L388 698M232 975L295 945M500 863L600 825M438 893L450 943M912 693L955 678M793 743L842 725M1046 640L1085 627M1148 597L1195 580M1062 787L1103 870" />
    </g>
    <g fontSize="22" fill="#666a6e" fontFamily="Inter, sans-serif">
      <path d="M72 530V575L53 541M72 575L127 560" fill="none" stroke="#666" strokeWidth="2" />
      <text x="53" y="542">y</text>
      <text x="75" y="532">z</text>
      <text x="129" y="562">x</text>
    </g>
  </svg>
);

const FrontScene = () => (
  <svg width="1010" height="712">
    <g transform="translate(56.200 452)">
      <Grid step={65.97} ext={20} />
      <path d="M0 0V-500" stroke={GREEN} strokeWidth="3.500" />
      <path d="M0 0H1000" stroke={RED} strokeWidth="4" />
    </g>
    <g transform="translate(-2 -6) scale(.65049 .49363)" fill="none" stroke="#000">
      <rect x="269" y="678" width="1086" height="250" fill="url(#frontFace)" stroke="none" />
      <rect x="847" y="678" width="268" height="250" fill="url(#darkFace)" stroke="none" />
      <rect x="1316" y="678" width="39" height="250" fill="url(#curveFace)" stroke="none" />
      <path {...nss} strokeWidth="2" d="M269 802H1355M353.500 680V926M642 680V926M981.500 680V926M1215 680V926M1355 678V928" />
      <path {...nss} strokeWidth="3.400" d="M438 678V928M847 678V928M1115 678V928M1314 678V928" />
      <path {...nss} strokeWidth="4" strokeLinejoin="round" d="M1355 678H269V928H1355" />
    </g>
    <AxisMark x={72} y={640} up="z" right="x" />
  </svg>
);

const sideLines: [number, number][] = [
  [842, 3.5], [908, 1.5], [918, 3], [930, 3.5], [937, 2], [961, 2], [992, 3.5], [1011, 2], [1022, 14], [1034, 1.5],
  [1060, 2], [1065, 4], [1079, 3.5], [1110, 3], [1118, 3.5], [1160, 2.5], [1173, 2], [1177, 2], [1192, 2], [1235, 3], [1249, 3.5],
];
const RightScene = () => (
  <svg width="1002" height="712">
    <g transform="translate(502.200 355.800)">
      <Grid step={23.08} ext={30} />
      <path d="M0 0V-500" stroke={GREEN} strokeWidth="3.500" />
      <path d="M0 0H700" stroke={RED} strokeWidth="4" />
    </g>
    <g transform="translate(-6 -6) scale(.64412 .49363)" fill="none" stroke="#000">
      <rect {...nss} x="821" y="645" width="486" height="89" strokeWidth="3.800" strokeLinejoin="round" />
      <path {...nss} d="M821 690H1307" strokeWidth="2" />
      {sideLines.map(([x, w]) => <path key={x} {...nss} d={`M${x} 645V734`} strokeWidth={w} />)}
    </g>
    <AxisMark x={72} y={640} up="z" right="y" />
  </svg>
);

/* ---------- data ---------- */
const tabs: [string, number][] = [
  ["Standard", 129], ["CPlanes", 118], ["Set View", 124], ["Display", 113], ["Select", 102], ["Viewport Layout", 196],
  ["Visibility", 124], ["Transform", 138], ["Curve Tools", 152], ["Surface Tools", 170], ["Solid Tools", 144],
  ["Mesh Tools", 148], ["Render Tools", 164], ["Drafting", 120],
];
const modes: [string, number, boolean?][] = [
  ["Grid Snap", 168], ["Ortho", 115], ["Planar", 124], ["SmartTrack", 185, true], ["Gumball", 143, true], ["History", 134],
];
const snaps: [string, "on" | "off" | "dim"][] = [
  ["End", "on"], ["Near", "on"], ["Point", "on"], ["Midpoint", "on"], ["Center", "on"], ["Intersection", "off"],
  ["Perpendicular", "off"], ["Tangent", "off"], ["Quadrant", "off"], ["Knot", "off"], ["Vertex", "off"],
  ["On curve", "dim"], ["On surface", "dim"], ["On polysurface", "dim"], ["On mesh", "dim"], ["Project", "off"],
];
const layers: [string, string][] = [
  ["Default", "#000"], ["Layer 01", "#ff2a1a"], ["Layer 02", "#904bd6"], ["Layer 03", "#0c3cff"], ["Layer 04", "#048a10"], ["Layer 05", "#fff"],
];

const LayerPanel = ({ height, rule }: { height: number; rule?: boolean }) => (
  <Panel $h={height} $rule={rule}>
    <PanelStrip>
      {stripIcons.map((ic, i) => (
        <StripIcon key={i} viewBox="0 0 48 50"><g fill="none" stroke="#555" strokeWidth="2">{ic}</g></StripIcon>
      ))}
    </PanelStrip>
    <Head>
      {["Name", "", "", "", "", "", "Linetype", "", "P"].map((t, i) => <HeadCell key={i}>{t}</HeadCell>)}
    </Head>
    <Rows>
      {layers.map(([name, color], i) => (
        <Row key={name}>
          <LayerName>{name}</LayerName>
          <Radio $on={i === 0} />
          <Bulb dim={i === 0} />
          <Unlock dim={i === 0} />
          <Swatch $c={color} />
          <Ball />
          <Line>Conti...<Stepper /></Line>
          <svg width="32" height="32"><path d="M16 2l14 14-14 14L2 16z" fill={color} stroke="#000" strokeWidth="2" /></svg>
          <PrintWidth><Stepper /></PrintWidth>
        </Row>
      ))}
    </Rows>
    <PanelFoot>
      <FootBtn $w={93}>
        <svg width="91" height="31"><path d="M14 15.500h22M25 4.500v22" stroke="#444" strokeWidth="2" /><path d="M58 15.500h22" stroke="#ccc" strokeWidth="2" /></svg>
      </FootBtn>
      <FootBtn $w={69}>
        <svg width="67" height="31" fill="none" stroke="#222">
          <circle cx="22" cy="16" r="5.500" strokeWidth="4.500" />
          <circle cx="22" cy="16" r="8.700" strokeWidth="3.200" strokeDasharray="3.600 3.233" strokeDashoffset="1.800" />
          <path d="M49 13l6 6 6-6" stroke="#444" strokeWidth="2.500" />
        </svg>
      </FootBtn>
    </PanelFoot>
  </Panel>
);

export default function App() {
  return (
    <Window>
      <Global />
      <Defs />
      <Header>
        <TitleBar>
          <Lights>
            <Light $c="#fd5f5a" $b="#e0443e" />
            <Light $c="#fdbc40" $b="#dea035" />
            <Light $c="#34c84a" $b="#24aa33" />
          </Lights>
          <Title>
            <svg width="25" height="32">
              <path d="M1 1h16l7 7v23H1z" fill="#f4f4f4" stroke="#bbb" />
              <path d="M3 4l6 3 5-5 2 8 7 9-1 7-8-2-4-8-6 3-2-6z" fill="#222" />
              <path d="M7 7l4 8" stroke="#bbb" strokeWidth="2" />
            </svg>
            RM thin.3dm
            <svg width="18" height="12" fill="none" stroke="#a5a3a6" strokeWidth="2.500"><path d="M1.500 2l7.500 7 7.500-7" /></svg>
          </Title>
        </TitleBar>
        <ModeBar>
          <ModeIcon width="68" height="60">
            <path d="M29 12h37v36H29z" fill="none" stroke="#157efb" strokeWidth="2.500" />
            <path d="M28 11h12v38H28z" fill="#157efb" />
          </ModeIcon>
          <Modes>
            {modes.map(([t, w, on]) => <Mode key={t} $w={w} $on={on}>{t}</Mode>)}
          </Modes>
          <Spacer />
          <ModeIcon width="42" height="60" fill="none">
            <circle cx="18" cy="28" r="17" stroke="#777" strokeWidth="2" />
            <path d="M18 28h23" stroke="#000" strokeWidth="2" />
            <H x={18} y={28} />
          </ModeIcon>
          <ModeIcon width="62" height="60" fill="none" stroke="#111" strokeWidth="2">
            <circle cx="40" cy="28.500" r="20" /><circle cx="40" cy="28.500" r="10" />
          </ModeIcon>
          <LayerPick><BlackChip /><span>Default</span></LayerPick>
          <ModeIcon width="659" height="60">
            <path d="M592 12h37v36h-37z" fill="none" stroke="#157efb" strokeWidth="2.500" />
            <path d="M618 11h12v38h-12z" fill="#157efb" />
          </ModeIcon>
        </ModeBar>
      </Header>
      <Tabs>{tabs.map(([t, w], i) => <Tab key={t} $w={w} $on={i === 0}>{t}</Tab>)}</Tabs>
      <Toolbar>{tools.map((ic, i) => <IconCell key={i} icon={ic} />)}</Toolbar>
      <Body>
        <Left>
          <LeftStrip />
          <Command>Command</Command>
          <Palette>{palette.map((ic, i) => <IconCell key={i} icon={ic} />)}</Palette>
          <Snaps>
            <SnapGroup>
              <Snap><Radio $on />Persistent</Snap>
              <Snap><Radio />One shot</Snap>
            </SnapGroup>
            <SnapGroup $top={10}>
              {snaps.map(([t, s]) => (
                <Snap key={t} $dim={s === "dim"}>
                  <Check $on={s === "on"} $dim={s === "dim"}>
                    {s === "on" && <svg width="16" height="16" fill="none" stroke="#fff" strokeWidth="2.600"><path d="M2 8.500l4 5L14 2" /></svg>}
                  </Check>
                  {t}
                </Snap>
              ))}
            </SnapGroup>
          </Snaps>
        </Left>
        <Center>
          <ViewStrip>
            <svg width="130" height="40" fill="none" strokeWidth="2">
              <path d="M2 2h39v35H2zM21.500 2v35" stroke="#157efb" /><path d="M2 19.500h39" stroke="#157efb" strokeWidth="3" />
              <path d="M3 3.500h7M23 3.500h7M3 21.500h7M23 21.500h7" stroke="#157efb" strokeWidth="3" />
              <path d="M66 2h38v35H66z" stroke="#555" /><path d="M67 3.500h7" stroke="#555" strokeWidth="3" />
            </svg>
            <Bar /><ViewTab $w={220} $on>Perspective</ViewTab>
            <Bar /><ViewTab $w={124}>Top</ViewTab>
            <Bar /><ViewTab $w={142}>Front</ViewTab>
            <Bar /><ViewTab $w={141}>Right</ViewTab>
            <Spacer />
            <LayoutsLabel>Layouts...</LayoutsLabel>
          </ViewStrip>
          <Views>
            <View><TopScene /><Tag>Top</Tag></View>
            <View><PerspectiveScene /><Tag $on>Perspective</Tag></View>
            <View><FrontScene /><Tag>Front</Tag></View>
            <View><RightScene /><Tag>Right</Tag></View>
          </Views>
        </Center>
        <Right>
          <LayerPanel height={716} />
          <LayerPanel height={702} rule />
        </Right>
      </Body>
      <Status>
        <svg width="28" height="24" stroke="#666" strokeWidth="2"><path d="M0 3h28M0 9h28M0 15h28M0 21h28" /></svg>
        <StatusText $w={1817} $ml={5}>File successfully written as /Users/davekennedy/Desktop/HCDE Courses/598 Fabrication/</StatusText>
        <StatusText $w={148}>Millimeters</StatusText>
        <PlanePick>CPlane<Stepper /></PlanePick>
        <StatusText $w={164} $ml={28}>X: -8.560</StatusText>
        <StatusText $w={170}>Y: -4.662</StatusText>
        <StatusText $w={100}>Z: 0.000</StatusText>
      </Status>
    </Window>
  );
}
